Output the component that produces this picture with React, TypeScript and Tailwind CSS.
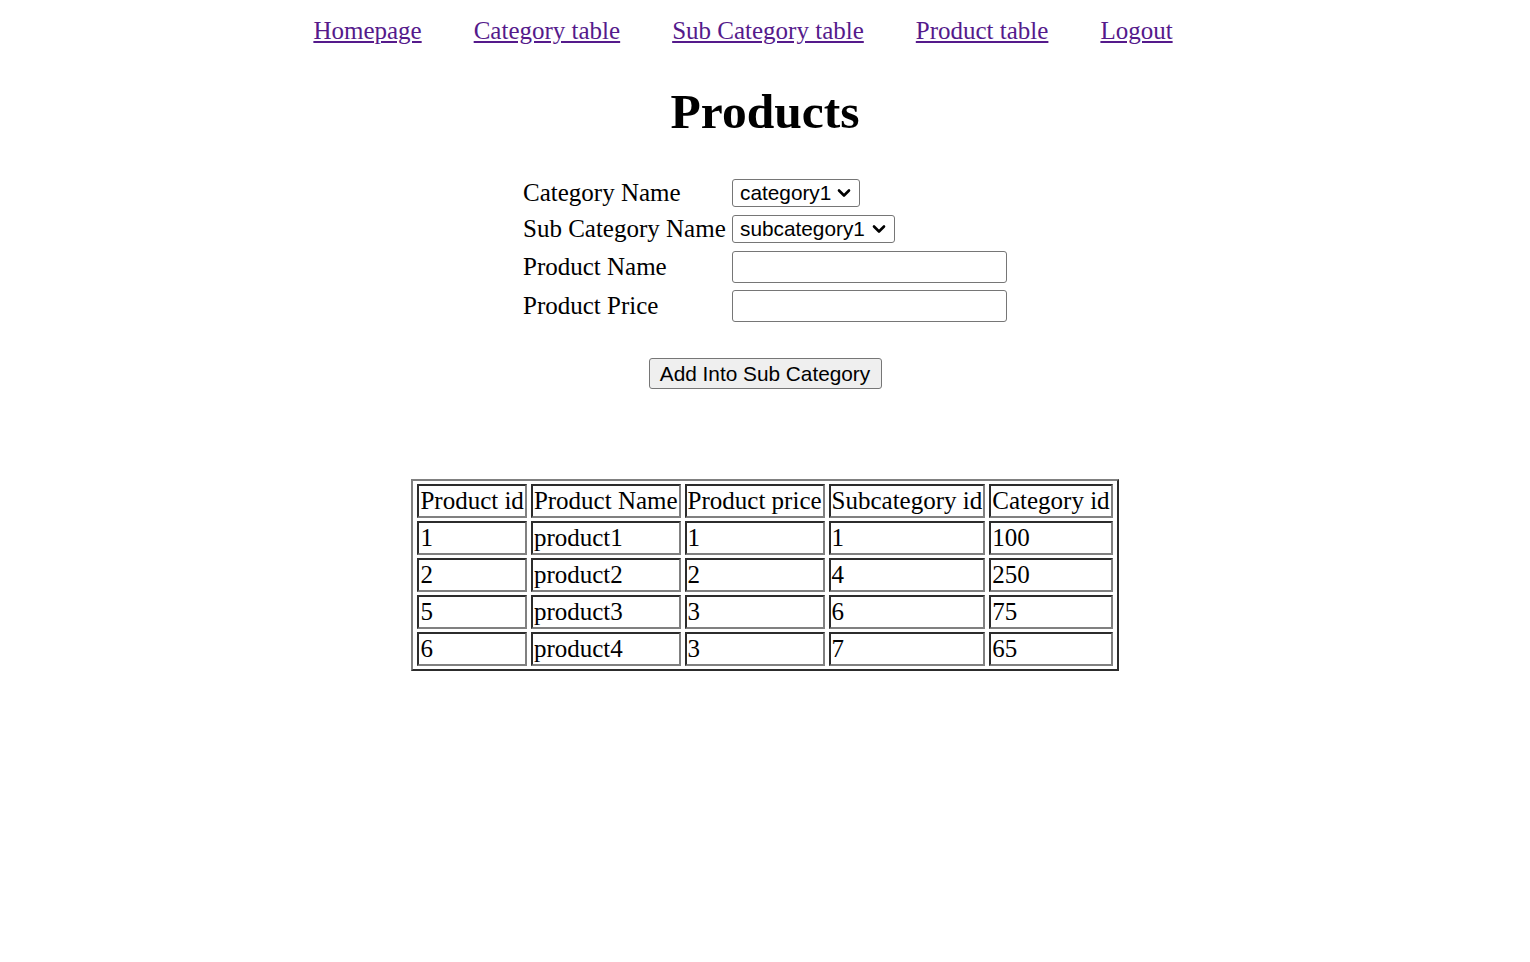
import React from "react";

const Chevron = () => (
  <svg width="14" height="10" viewBox="0 0 14 10" className="absolute right-[8px] top-1/2 -translate-y-1/2 pointer-events-none">
    <polyline points="2,2.5 7,7.5 12,2.5" fill="none" stroke="#000" strokeWidth="2.6" strokeLinecap="round" strokeLinejoin="round" />
  </svg>
);

const rows = [
  ["1", "product1", "1", "1", "100"],
  ["2", "product2", "2", "4", "250"],
  ["5", "product3", "3", "6", "75"],
  ["6", "product4", "3", "7", "65"],
];

const headers = ["Product id", "Product Name", "Product price", "Subcategory id", "Category id"];

export default function App() {
  const links = ["Homepage", "Category table", "Sub Category table", "Product table", "Logout"];
  const cellCls =
    "border-2 [border-style:inset] border-[#808080] px-[1px] py-[1px] leading-[28px] text-left font-normal align-middle whitespace-nowrap";
  return (
    <div className="min-h-screen bg-white text-black font-['Liberation_Serif','Times_New_Roman',serif] text-[25px]">
      <nav className="flex justify-center pt-[17px] leading-[28px] pl-[8px]">
        {links.map((l) => (
          <a key={l} href="#" className="text-[#551A8B] underline mr-[52px]">
            {l}
          </a>
        ))}
      </nav>
      <h1 className="mt-[39px] text-center text-[49.5px] font-bold leading-[55px] h-[55px]">Products</h1>
      <div className="mt-[36px] flex justify-center">
        <div className="grid grid-cols-[209px_275px]">
          <div className="h-[36px] flex items-center">Category Name</div>
          <div className="h-[36px] flex items-center">
            <div className="relative w-[128px] h-[28px] border border-[#767676] rounded-[3px] bg-white">
              <span className="absolute left-[7px] top-1/2 -translate-y-1/2 font-['Liberation_Sans',Arial,sans-serif] text-[20.8px] leading-[22px]">category1</span>
              <Chevron />
            </div>
          </div>
          <div className="h-[36px] flex items-center">Sub Category Name</div>
          <div className="h-[36px] flex items-center">
            <div className="relative w-[163px] h-[28px] border border-[#767676] rounded-[3px] bg-white">
              <span className="absolute left-[7px] top-1/2 -translate-y-1/2 font-['Liberation_Sans',Arial,sans-serif] text-[20.8px] leading-[22px]">subcategory1</span>
              <Chevron />
            </div>
          </div>
          <div className="h-[39px] flex items-center">Product Name</div>
          <div className="h-[39px] flex items-center">
            <input className="w-[275px] h-[32px] border-[1.5px] border-[#767676] rounded-[3px] bg-white outline-none" />
          </div>
          <div className="h-[39px] flex items-center">Product Price</div>
          <div className="h-[39px] flex items-center">
            <input className="w-[275px] h-[32px] border-[1.5px] border-[#767676] rounded-[3px] bg-white outline-none" />
          </div>
        </div>
      </div>
      <div className="mt-[33px] flex justify-center">
        <button className="w-[233px] h-[31px] bg-[#efefef] border-[1.5px] border-[#767676] rounded-[3px] font-['Liberation_Sans',Arial,sans-serif] text-[20.8px] leading-[22px] text-black">
          Add Into Sub Category
        </button>
      </div>
      <div className="mt-[90px] flex justify-center">
        <table className="border-separate border-spacing-x-[4px] border-spacing-y-[3.5px] border-2 [border-style:outset] border-[#808080]">
          <tbody>
            <tr>
              {headers.map((h) => (
                <td key={h} className={cellCls}>
                  {h}
                </td>
              ))}
            </tr>
            {rows.map((r, ri) => (
              <tr key={ri}>
                {r.map((c, ci) => (
                  <td key={ci} className={cellCls}>
                    {c}
                  </td>
                ))}
              </tr>
            ))}
          </tbody>
        </table>
      </div>
    </div>
  );
}
